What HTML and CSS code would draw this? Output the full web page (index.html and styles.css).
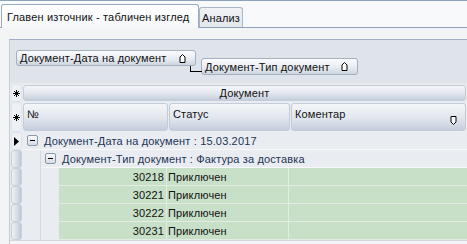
FILE: index.html
```html
<!DOCTYPE html>
<html lang="bg">
<head>
    <meta charset="UTF-8">
    <title>Главен източник</title>
    <link rel="stylesheet" href="styles.css">
</head>
<body>
    <div class="tabs">
        <div class="tab active">Главен източник - табличен изглед</div>
        <div class="tab">Анализ</div>
    </div>
    <div class="tab-body">
        <div class="pane">
            <div class="group-panel">
                <div class="group-btn first">Документ-Дата на документ
                    <svg class="sort" width="7" height="9" viewBox="0 0 7 9"><path d="M3.5 0.5 L6 3 L6 8.5 L1 8.5 L1 3 Z" fill="#fff" stroke="#000"/></svg>
                </div>
                <div class="group-btn second">Документ-Тип документ
                    <svg class="sort" width="7" height="9" viewBox="0 0 7 9"><path d="M3.5 0.5 L6 3 L6 8.5 L1 8.5 L1 3 Z" fill="#fff" stroke="#000"/></svg>
                </div>
            </div>

            <div class="grid">
                <div class="band-row">
                    <div class="ind head-ind"><svg width="7" height="7" viewBox="0 0 7 7"><path d="M3.5 0 V7 M0 3.5 H7 M1 1 L6 6 M6 1 L1 6" stroke="#000" stroke-width="1"/></svg></div>
                    <div class="hcell band">Документ</div>
                </div>
                <div class="head-row">
                    <div class="ind head-ind"><svg width="7" height="7" viewBox="0 0 7 7"><path d="M3.5 0 V7 M0 3.5 H7 M1 1 L6 6 M6 1 L1 6" stroke="#000" stroke-width="1"/></svg></div>
                    <div class="hcell c-no">№</div>
                    <div class="hcell c-st">Статус</div>
                    <div class="hcell c-cm">Коментар
                        <svg class="filter" width="7" height="9" viewBox="0 0 7 9"><path d="M1 0.5 L6 0.5 L6 6 L3.5 8.5 L1 6 Z" fill="#fff" stroke="#000"/></svg>
                    </div>
                </div>

                <div class="row group-row">
                    <div class="ind current"><svg width="5" height="9" viewBox="0 0 5 9"><path d="M0 0 L5 4.5 L0 9 Z" fill="#000"/></svg></div>
                    <div class="group-cell">
                        <span class="expand"></span>Документ-Дата на документ : 15.03.2017
                    </div>
                </div>
                <div class="row group-row">
                    <div class="ind"></div>
                    <div class="indent"></div>
                    <div class="group-cell nested">
                        <span class="expand"></span>Документ-Тип документ : Фактура за доставка
                    </div>
                </div>

                <div class="row data-row">
                    <div class="ind"></div>
                    <div class="indent"></div>
                    <div class="indent2"></div>
                    <div class="cell c-no">30218</div>
                    <div class="cell c-st">Приключен</div>
                    <div class="cell c-cm"></div>
                </div>
                <div class="row data-row">
                    <div class="ind"></div>
                    <div class="indent"></div>
                    <div class="indent2"></div>
                    <div class="cell c-no">30221</div>
                    <div class="cell c-st">Приключен</div>
                    <div class="cell c-cm"></div>
                </div>
                <div class="row data-row">
                    <div class="ind"></div>
                    <div class="indent"></div>
                    <div class="indent2"></div>
                    <div class="cell c-no">30222</div>
                    <div class="cell c-st">Приключен</div>
                    <div class="cell c-cm"></div>
                </div>
                <div class="row data-row">
                    <div class="ind"></div>
                    <div class="indent"></div>
                    <div class="indent2"></div>
                    <div class="cell c-no">30231</div>
                    <div class="cell c-st">Приключен</div>
                    <div class="cell c-cm"></div>
                </div>
                <div class="grid-foot"></div>
            </div>
        </div>
    </div>
</body>
</html>
```

FILE: styles.css
```css
body {
    margin: 0;
    width: 467px;
    height: 244px;
    overflow: hidden;
    font-family: 'Liberation Sans', Arial, sans-serif;
    font-size: 11px;
    letter-spacing: 0.15px;
    color: #111;
    background: #f2f4f6;
    border-top: 1px solid #8ea2bb;
    box-sizing: border-box;
}

/* tabs */
.tabs {
    display: flex;
    align-items: flex-end;
    height: 26px;
    background: #f7f9fb;
    border-bottom: 1px solid #8ea2bb;
    padding-left: 1px;
}
.tab {
    height: 19px;
    line-height: 20px;
    padding: 0 2px;
    background: linear-gradient(#f0f2f5, #e2e7ed);
    border: 1px solid #aab6c6;
    border-bottom: none;
    border-radius: 3px 3px 0 0;
    white-space: nowrap;
}
.tab.active {
    height: 23px;
    line-height: 25px;
    width: 188px;
    padding: 0 3px 0 5px;
    background: linear-gradient(#ffffff, #f5f7f9);
    border-color: #9aabc0;
    margin-bottom: -1px;
}

/* content */
.tab-body {
    padding: 11px 0 0 9px;
}
.pane {
    border-top: 1px solid #9fb0c4;
    border-left: 1px solid #c2ccd8;
    background: #e9edf1;
}
.group-panel {
    height: 44px;
    background: #dfe4ea;
    border-bottom: 1px solid #e8ecf0;
    display: flex;
    align-items: flex-start;
    padding: 10px 0 0 6px;
    box-sizing: border-box;
}
.group-btn {
    height: 16px;
    line-height: 16px;
    box-sizing: border-box;
    padding: 0 0 0 3px;
    border: 1px solid #a3b0c0;
    border-radius: 3px;
    background: linear-gradient(#fbfcfd, #e6eaf0 60%, #cdd5df);
    display: flex;
    align-items: center;
    white-space: nowrap;
    color: #111;
}
.group-btn.first {
    width: 180px;
}
.group-btn.second {
    width: 157px;
    height: 17px;
    margin: 8px 0 0 5px;
    position: relative;
}
.group-btn.second::before {
    content: "";
    position: absolute;
    left: -12px;
    top: 7px;
    width: 11px;
    height: 5px;
    border-left: 1px solid #000;
    border-bottom: 1px solid #000;
}
.group-btn .sort {
    margin-left: auto;
    margin-right: 9px;
}

/* grid */
.grid {
    background: #e9edf1;
}
.band-row, .head-row, .row {
    display: flex;
}
.band-row {
    height: 18px;
}
.head-row {
    height: 30px;
}
.ind {
    width: 11px;
    flex: none;
    box-sizing: border-box;
    display: flex;
    align-items: center;
    justify-content: center;
    border-radius: 3px;
    margin: 0 0 0 1px;
    background: linear-gradient(90deg, #eef2f6, #d3dbe5 60%, #bcc7d5);
    border: 1px solid #c7d0db;
}
.head-ind {
    background: #eef1f4;
    border-color: #e0e5eb;
}
.ind.current {
    background: #eef1f4;
    border-color: #dfe4ea;
    justify-content: flex-start;
    padding-left: 2px;
}
.hcell {
    box-sizing: border-box;
    margin: 1px 0 1px 1px;
    border: 1px solid #c3ccd8;
    border-radius: 3px;
    background: linear-gradient(#f4f6f9, #e1e6ed 55%, #c4cedb);
    padding: 0 3px;
    color: #111;
}
.band {
    flex: 1;
    text-align: center;
    line-height: 14px;
    margin-right: 1px;
}
.head-row .hcell {
    line-height: 14px;
    padding-top: 3px;
}
.head-row .c-no {
    width: 145px;
}
.head-row .c-st {
    width: 121px;
}
.head-row .c-cm {
    flex: 1;
    margin-right: 1px;
    position: relative;
}
.filter {
    position: absolute;
    right: 8px;
    top: 12px;
}

.row {
    height: 18px;
    line-height: 18px;
}
.row .ind {
    height: 18px;
}
.group-row {
    background: #e9edf1;
}
.group-cell {
    flex: 1;
    display: flex;
    align-items: center;
    padding-left: 5px;
    color: #1c3356;
    border-bottom: 1px solid #f6f8fa;
    box-sizing: border-box;
    white-space: nowrap;
}
.group-cell.nested {
    padding-left: 4px;
}
.indent {
    width: 19px;
    flex: none;
    border-right: 1px solid #d4dbe3;
    box-sizing: border-box;
}
.indent2 {
    width: 18px;
    flex: none;
}
.expand {
    width: 11px;
    height: 11px;
    box-sizing: border-box;
    border: 1px solid #8a98aa;
    border-radius: 2px;
    background: linear-gradient(#f7f9fb, #d6dde6);
    margin-right: 6px;
    position: relative;
}
.expand::after {
    content: "";
    position: absolute;
    left: 2px;
    top: 4px;
    width: 5px;
    height: 1px;
    background: #000;
}

.data-row .cell {
    background: #c8dfc8;
    border-bottom: 1px solid #e2ece2;
    box-sizing: border-box;
    color: #111;
    white-space: nowrap;
}
.data-row .c-no {
    width: 108px;
    text-align: right;
    padding-right: 2px;
    border-right: 1px solid #e2ece2;
}
.data-row .c-st {
    width: 122px;
    padding-left: 1px;
    border-right: 1px solid #e2ece2;
}
.data-row .c-cm {
    flex: 1;
}
.grid-foot {
    height: 3px;
    border-top: 1px solid #d0d7df;
    background: #f2f4f6;
}
```
